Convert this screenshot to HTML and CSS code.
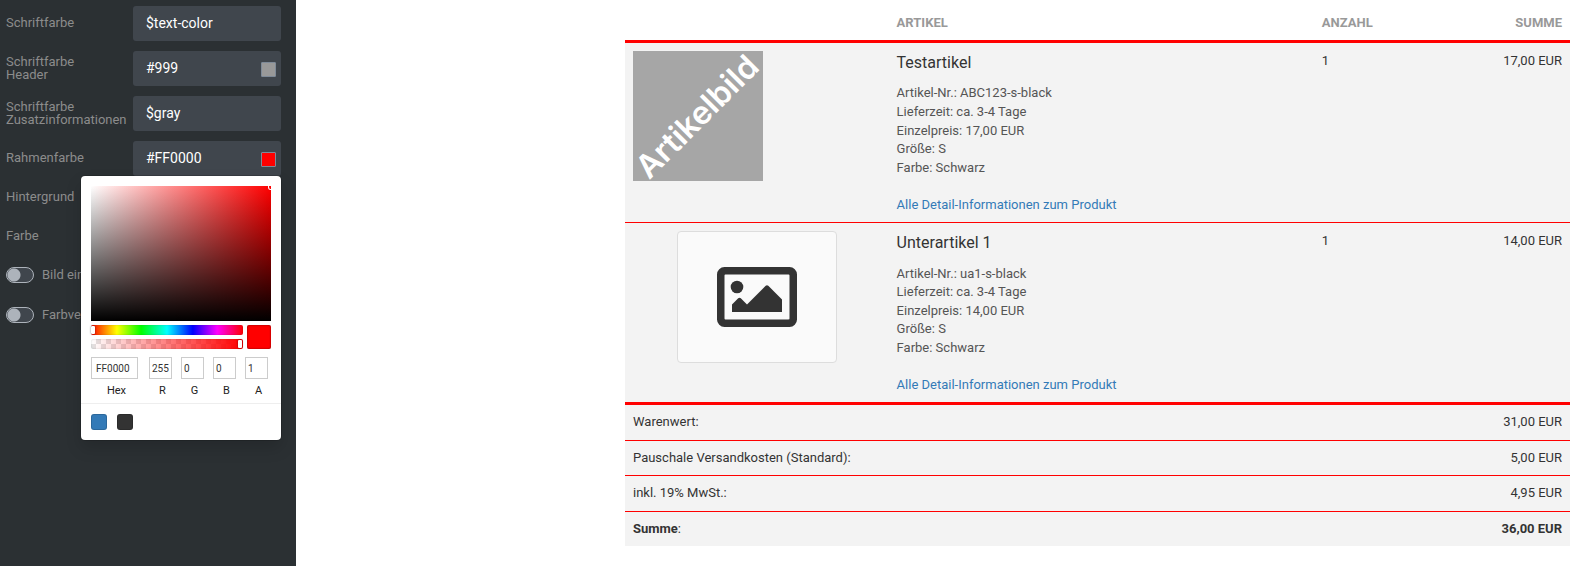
FILE: index.html
```
<!DOCTYPE html>
<html lang="de">
<head>
<meta charset="utf-8">
<title>Warenkorb</title>
<link rel="stylesheet" href="styles.css">
</head>
<body>
<div class="layout">
  <aside class="sidebar">
    <form class="settings">
      <div class="field">
        <label class="field-label" for="c-text">Schriftfarbe</label>
        <div class="field-control"><input class="field-input" id="c-text" type="text" value="$text-color"></div>
      </div>
      <div class="field">
        <label class="field-label" for="c-head">Schriftfarbe<br>Header</label>
        <div class="field-control"><input class="field-input" id="c-head" type="text" value="#999"><button class="swatch swatch-gray" type="button" aria-label="Farbe wählen"></button></div>
      </div>
      <div class="field">
        <label class="field-label" for="c-extra">Schriftfarbe<br>Zusatzinformationen</label>
        <div class="field-control"><input class="field-input" id="c-extra" type="text" value="$gray"></div>
      </div>
      <div class="field">
        <label class="field-label" for="c-border">Rahmenfarbe</label>
        <div class="field-control">
          <input class="field-input" id="c-border" type="text" value="#FF0000"><button class="swatch swatch-red" type="button" aria-label="Farbe wählen"></button>
          <div class="picker">
            <div class="picker-map"><span class="map-pointer"></span></div>
            <div class="picker-controls">
              <div class="bars">
                <div class="bar hue"><span class="bar-handle"></span></div>
                <div class="bar alpha"><span class="bar-handle handle-end"></span></div>
              </div>
              <div class="current"></div>
            </div>
            <div class="channels">
              <div class="channel channel-hex"><input class="channel-input" id="p-hex" type="text" value="FF0000"><label class="channel-label" for="p-hex">Hex</label></div>
              <div class="channel"><input class="channel-input" id="p-r" type="text" value="255"><label class="channel-label" for="p-r">R</label></div>
              <div class="channel"><input class="channel-input" id="p-g" type="text" value="0"><label class="channel-label" for="p-g">G</label></div>
              <div class="channel"><input class="channel-input" id="p-b" type="text" value="0"><label class="channel-label" for="p-b">B</label></div>
              <div class="channel"><input class="channel-input" id="p-a" type="text" value="1"><label class="channel-label" for="p-a">A</label></div>
            </div>
            <div class="presets">
              <button class="preset preset-blue" type="button" aria-label="Blau"></button>
              <button class="preset preset-dark" type="button" aria-label="Dunkelgrau"></button>
            </div>
          </div>
        </div>
      </div>
      <div class="heading">Hintergrund</div>
      <div class="heading">Farbe</div>
      <label class="toggle"><input class="toggle-input" type="checkbox"><span>Bild ein</span></label>
      <label class="toggle"><input class="toggle-input" type="checkbox"><span>Farbve</span></label>
    </form>
  </aside>
  <main class="content">
    <table class="cart">
      <colgroup><col class="col-image"><col class="col-item"><col class="col-count"><col></colgroup>
      <thead>
        <tr><th></th><th>ARTIKEL</th><th>ANZAHL</th><th class="num">SUMME</th></tr>
      </thead>
      <tbody class="items">
        <tr>
          <td>
            <svg class="product-image" viewBox="0 0 130 130" role="img" aria-label="Artikelbild">
              <rect width="130" height="130" fill="#a6a6a6"/>
              <text class="image-text" x="64" y="76" text-anchor="middle" transform="rotate(-45 65 65)">Artikelbild</text>
            </svg>
          </td>
          <td>
            <h4 class="item-title">Testartikel</h4>
            <div class="item-info">Artikel-Nr.: ABC123-s-black<br>Lieferzeit: ca. 3-4 Tage<br>Einzelpreis: 17,00 EUR<br>Größe: S<br>Farbe: Schwarz</div>
            <a class="item-link" href="#">Alle Detail-Informationen zum Produkt</a>
          </td>
          <td>1</td>
          <td class="num">17,00 EUR</td>
        </tr>
        <tr>
          <td>
            <div class="placeholder">
              <svg class="placeholder-icon" viewBox="0 0 80 60" aria-hidden="true">
                <path fill="#333" fill-rule="evenodd" d="M7.500 0h65A7.500 7.500 0 0 1 80 7.500v45a7.500 7.500 0 0 1-7.500 7.500h-65A7.500 7.500 0 0 1 0 52.500v-45A7.500 7.500 0 0 1 7.500 0zM8.400 7.500a.9.900 0 0 0-.9.900v43.200c0 .5.400.9.900.9h63.200c.5 0 .9-.4.900-.9V8.400a.9.900 0 0 0-.9-.9z"/>
                <circle cx="20" cy="20" r="6.300" fill="#333"/>
                <path fill="#333" d="M15 45v-7.500l6.200-6.200a1.900 1.900 0 0 1 2.600 0L30 37.500l18.700-18.700a1.900 1.900 0 0 1 2.600 0L65 32.500V45z"/>
              </svg>
            </div>
          </td>
          <td>
            <h4 class="item-title">Unterartikel 1</h4>
            <div class="item-info">Artikel-Nr.: ua1-s-black<br>Lieferzeit: ca. 3-4 Tage<br>Einzelpreis: 14,00 EUR<br>Größe: S<br>Farbe: Schwarz</div>
            <a class="item-link" href="#">Alle Detail-Informationen zum Produkt</a>
          </td>
          <td>1</td>
          <td class="num">14,00 EUR</td>
        </tr>
      </tbody>
      <tbody class="totals">
        <tr><td colspan="3">Warenwert:</td><td class="num">31,00 EUR</td></tr>
        <tr><td colspan="3">Pauschale Versandkosten (Standard):</td><td class="num">5,00 EUR</td></tr>
        <tr><td colspan="3">inkl. 19% MwSt.:</td><td class="num">4,95 EUR</td></tr>
        <tr><td colspan="3"><strong>Summe</strong>:</td><td class="num"><strong>36,00 EUR</strong></td></tr>
      </tbody>
    </table>
  </main>
</div>
</body>
</html>
```
FILE: styles.css
```
* { box-sizing: border-box; }

body {
  margin: 0;
  background: #fff;
  color: #333;
  font: 13px/1.42857 Roboto, "Liberation Sans", sans-serif;
}

input, button { font: inherit; margin: 0; }

.layout { display: flex; min-height: 100vh; }

/* Settings panel */
.sidebar {
  flex: 0 0 296px;
  padding: 6px 15px 0 6px;
  background: #2b3033;
}

.settings { display: flex; flex-direction: column; }

.field {
  display: flex;
  align-items: center;
  margin-bottom: 10px;
}

.field-label {
  flex: 0 0 127px;
  padding-bottom: 2px;
  color: #8c8c8c;
  line-height: 13px;
}

.field-control { position: relative; flex: 1; display: flex; }

.field-input {
  width: 100%;
  height: 35px;
  padding: 0 36px 2px 13px;
  border: 0;
  border-radius: 3px;
  background: #40464d;
  color: #fff;
  font-size: 14px;
}

.swatch {
  position: absolute;
  right: 5px;
  top: 11px;
  width: 15px;
  height: 15px;
  padding: 0;
  border: 1px solid #7e8a98;
  border-radius: 1px;
}
.swatch-gray { background: #999; }
.swatch-red { background: #f00; }

.heading {
  margin-bottom: 17px;
  color: #8c8c8c;
  line-height: 22px;
}

.toggle {
  display: flex;
  align-items: center;
  gap: 8px;
  margin-bottom: 18px;
  color: #8c8c8c;
  line-height: 22px;
}

.toggle-input {
  appearance: none;
  width: 28px;
  height: 16px;
  border: 1px solid #adb3bb;
  border-radius: 8px;
  background: radial-gradient(circle at 7px 7px, #adb3bb 6px, #40464d 7px);
}

/* Colour picker */
.picker {
  position: absolute;
  top: 35px;
  right: 0;
  z-index: 2;
  width: 200px;
  padding: 10px 10px 0;
  border-radius: 4px;
  background: #fff;
  box-shadow: 0 0 0 1px rgba(0, 0, 0, .15), 0 8px 16px rgba(0, 0, 0, .15);
}

.picker-map {
  position: relative;
  height: 135px;
  overflow: hidden;
  background: linear-gradient(to top, #000, transparent), linear-gradient(to right, #fff, #f00);
}

.map-pointer {
  position: absolute;
  top: -2px;
  right: -2px;
  width: 5px;
  height: 6px;
  border: 1px solid #fff;
  border-radius: 50%;
}

.picker-controls { display: flex; gap: 4px; margin-top: 4px; }
.bars { flex: 1; display: grid; gap: 4px; }

.bar {
  position: relative;
  height: 10px;
  border-radius: 2px;
  box-shadow: inset 0 0 2px rgba(0, 0, 0, .2);
}
.hue { background: linear-gradient(to right, #f00, #ff0 17%, #0f0 33%, #0ff 50%, #00f 67%, #f0f 83%, #f00); }
.alpha {
  background:
    linear-gradient(to right, rgba(255, 0, 0, 0), #f00),
    repeating-conic-gradient(#e2e2e2 0 25%, #fff 0 50%) 0 0 / 10px 10px;
}

.bar-handle {
  position: absolute;
  top: 1px;
  left: 0;
  width: 4px;
  height: 8px;
  border-radius: 1px;
  background: #fff;
  box-shadow: 0 0 2px rgba(0, 0, 0, .6);
}
.handle-end { right: 1px; left: auto; }

.current {
  width: 24px;
  height: 24px;
  border-radius: 2px;
  background: #f00;
  box-shadow: inset 0 0 2px rgba(0, 0, 0, .6);
}

.channels { display: flex; gap: 9px; padding: 8px 3px 6px 0; }
.channel { flex: 1; min-width: 0; text-align: center; }
.channel-hex { flex: 0 0 49px; padding-right: 2px; }

.channel-input {
  display: block;
  width: 100%;
  height: 22px;
  padding: 0 0 0 2px;
  border: 1px solid #ccc;
  background: #fff;
  color: #333;
  font-size: 10px;
}
.channel-hex .channel-input { padding-left: 4px; }

.channel-label {
  display: block;
  padding: 5px 0 0 4px;
  color: #222;
  font-size: 11px;
  line-height: 13px;
}

.presets {
  display: flex;
  gap: 10px;
  margin: 0 -10px;
  padding: 10px;
  border-top: 1px solid #eee;
}

.preset {
  width: 16px;
  height: 16px;
  padding: 0;
  border: 0;
  border-radius: 3px;
  box-shadow: inset 0 0 0 1px rgba(0, 0, 0, .15);
}
.preset-blue { background: #337ab7; }
.preset-dark { background: #333; }

/* Cart */
.content { flex: 1; min-width: 0; padding: 5px 12px 20px 329px; }

.cart {
  width: 100%;
  table-layout: fixed;
  border-collapse: separate;
  border-spacing: 0;
}
.col-image { width: 28%; }
.col-item { width: 45%; }
.col-count { width: 10%; }

.cart th, .cart td { padding: 8px; text-align: left; vertical-align: top; }
.cart th { padding: 9px 8px 7px; border-bottom: 3px solid #f00; color: #999; font-weight: 700; }
.cart td { background: #f3f3f3; border-bottom: 1px solid #f00; }
.items td + td { padding: 9px 8px 7px; }
.cart th + th, .items td + td { padding-left: 7px; }
.items tr:last-child td { border-bottom-width: 3px; }
.totals tr:last-child td { border-bottom: 0; }
.cart .num { text-align: right; }

.product-image { display: block; width: 130px; height: 130px; }
.image-text {
  fill: #fff;
  font: 600 32px Inter, "Liberation Sans", sans-serif;
}

.placeholder {
  display: grid;
  place-items: center;
  width: 160px;
  height: 132px;
  margin: 0 auto;
  border: 1px solid #ddd;
  border-radius: 4px;
  background: #fafafa;
}
.placeholder-icon { width: 80px; height: 60px; }

.item-title { margin: 0 0 10px; font-size: 16px; font-weight: 400; }
.item-info { margin-bottom: 19px; color: #555; }
.item-link { color: #337ab7; text-decoration: none; }
```
